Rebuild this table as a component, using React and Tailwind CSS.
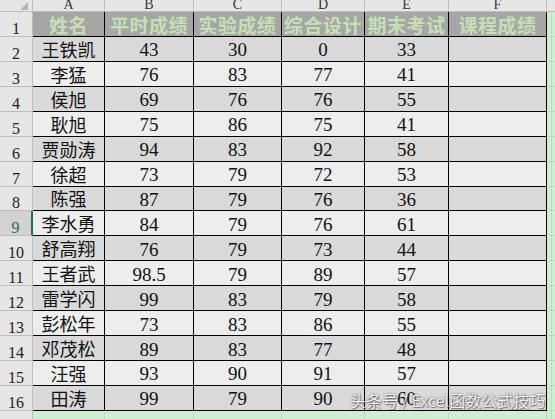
import React from 'react'

const cjk = "font-['Noto_Sans_CJK_SC',sans-serif]"
const serif = "font-['Liberation_Serif','Noto_Sans_CJK_SC',serif]"

const colW = ['w-[72px]', 'w-[89px]', 'w-[88px]', 'w-[83px]', 'w-[84px]', 'w-[98px]']
const letters = ['A', 'B', 'C', 'D', 'E', 'F']
const heads = ['姓名', '平时成绩', '实验成绩', '综合设计', '期末考试', '课程成绩']

const rows = [
  ['王铁凯', '43', '30', '0', '33'],
  ['李猛', '76', '83', '77', '41'],
  ['侯旭', '69', '76', '76', '55'],
  ['耿旭', '75', '86', '75', '41'],
  ['贾勋涛', '94', '83', '92', '58'],
  ['徐超', '73', '79', '72', '53'],
  ['陈强', '87', '79', '76', '36'],
  ['李水勇', '84', '79', '76', '61'],
  ['舒高翔', '76', '79', '73', '44'],
  ['王者武', '98.5', '79', '89', '57'],
  ['雷学闪', '99', '83', '79', '58'],
  ['彭松年', '73', '83', '86', '55'],
  ['邓茂松', '89', '83', '77', '48'],
  ['汪强', '93', '90', '91', '57'],
  ['田涛', '99', '79', '90', '60']
]

function RowHead({ n, active }) {
  return (
    <div
      className={`w-[33px] shrink-0 h-full flex items-end justify-center pb-[1px] border-b border-r text-[16px] leading-none ${serif} ${
        active
          ? 'bg-[#D2D2D2] text-[#217346] border-b-[#BDBDBD] border-r-2 border-r-[#217346]'
          : 'bg-[#E6E6E6] text-[#222] border-[#BDBDBD]'
      }`}
    >
      <span className="translate-y-[2px]">{n}</span>
    </div>
  )
}

function GreenTail() {
  return (
    <>
      <div className="w-[5px] shrink-0 h-full border-r border-b border-[#B7DDBD]" />
      <div className="flex-1 h-full border-b border-[#B7DDBD]" />
    </>
  )
}

export default function App() {
  return (
    <div className="relative w-[555px] h-[419px] overflow-hidden bg-[#CCEFD0]">
      {/* column letters */}
      <div className="flex h-[12px] overflow-hidden">
        <div className="w-[33px] shrink-0 h-full bg-[#E6E6E6] border-r border-b border-[#BDBDBD] flex justify-end items-end pr-[4px] pb-[1px]">
          <svg width="8" height="8" viewBox="0 0 8 8">
            <polygon points="8,0 8,8 0,8" fill="#B5B5B5" />
          </svg>
        </div>
        {letters.map((l, i) => (
          <div
            key={l}
            className={`${colW[i]} shrink-0 h-full bg-[#E6E6E6] border-r border-b border-[#BDBDBD] flex justify-center items-end text-[14px] leading-none text-[#333] ${serif}`}
          >
            <span className="translate-y-[1px]">{l}</span>
          </div>
        ))}
        <div className="flex-1 h-full bg-[#E6E6E6] border-b border-[#BDBDBD]" />
      </div>

      {/* header row */}
      <div className="flex h-[25px]">
        <RowHead n={1} />
        {heads.map((h, i) => (
          <div
            key={h}
            className={`${colW[i]} shrink-0 h-full bg-[#A6A6A6] border-r border-b border-black flex justify-center items-center text-[19px] font-bold leading-none tracking-[0.5px] text-[#C6E0B4] ${cjk}`}
          >
            {h}
          </div>
        ))}
        <GreenTail />
      </div>

      {/* data rows */}
      {rows.map((r, ri) => {
        const bg = ri % 2 === 0 ? 'bg-[#D9D9D9]' : 'bg-[#EDEDED]'
        return (
          <div key={ri} className="flex h-[24.93px]">
            <RowHead n={ri + 2} active={ri + 2 === 9} />
            {[...r, ''].map((v, ci) => (
              <div
                key={ci}
                className={`${colW[ci]} shrink-0 h-full ${bg} border-r border-b border-black flex justify-center items-center leading-none ${
                  ci === 0 ? `text-[18px] text-[#111] ${cjk}` : `text-[19px] text-[#111] pt-[2px] ${serif}`
                }`}
              >
                {v}
              </div>
            ))}
            <GreenTail />
          </div>
        )
      })}

      {/* row 17 */}
      <div className="flex h-[25px]">
        <RowHead n={17} />
        {colW.map((w, i) => (
          <div key={i} className={`${w} shrink-0 h-full border-r border-b border-[#B7DDBD]`} />
        ))}
        <GreenTail />
      </div>

      {/* watermark */}
      <div
        className={`absolute left-[350px] top-[392px] text-[16px] leading-none text-white/90 whitespace-nowrap [text-shadow:0_0_2px_rgba(0,0,0,0.6),1px_1px_1px_rgba(0,0,0,0.4)] ${cjk}`}
      >
        头条号 / Excel函数公式技巧
      </div>
    </div>
  )
}
